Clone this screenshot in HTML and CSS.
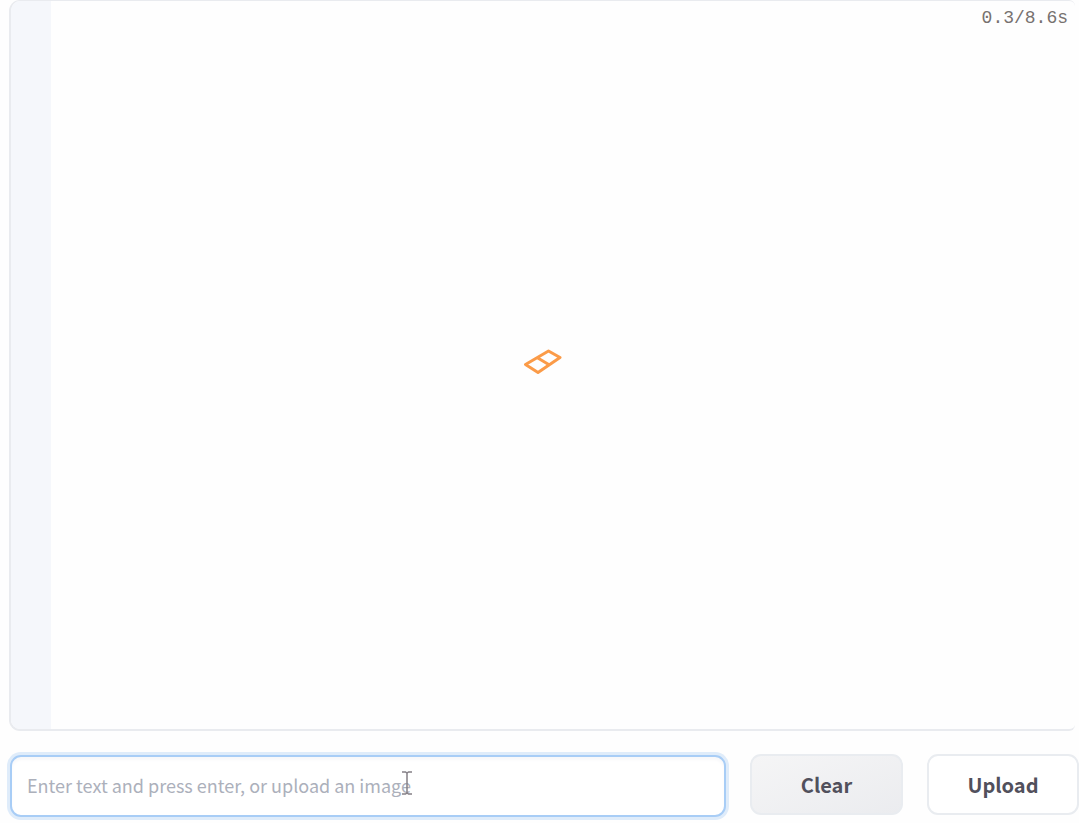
FILE: index.html
```html
<!DOCTYPE html>
<html lang="en">
<head>
<meta charset="utf-8">
<title>Chat</title>
<link rel="stylesheet" href="styles.css">
</head>
<body>
<main class="app">
  <section class="panel" aria-label="Conversation">
    <div class="panel-gutter"></div>
    <div class="panel-content">
      <svg class="loader" viewBox="0 0 40 28" role="img" aria-label="Loading">
        <path d="M3.500 16.500 26.500 3 38 9.500 16 24.500ZM15 9.500 27.500 17" />
      </svg>
      <span class="timer">0.3/8.6s</span>
    </div>
  </section>
  <form class="composer">
    <div class="field">
      <input class="text-input" type="text" aria-label="Message" placeholder="Enter text and press enter, or upload an image">
      <svg class="pointer" viewBox="0 0 12 24" aria-hidden="true">
        <path d="M1 1h3.500l1.500 1 1.500-1H11M6 2v20M1 23h3.500l1.500-1 1.500 1H11" />
      </svg>
    </div>
    <button class="button button-clear" type="button">Clear</button>
    <button class="button button-upload" type="button">Upload</button>
  </form>
</main>
</body>
</html>
```
FILE: styles.css
```css
* {
  box-sizing: border-box;
}

body {
  margin: 0;
  background: #fefefe;
  font-family: "Source Sans Pro", "Noto Sans CJK SC", sans-serif;
}

.app {
  display: flex;
  flex-direction: column;
  gap: 23px;
  min-height: 100vh;
  padding: 0 0 6px 9px;
  overflow: hidden;
}

.panel {
  display: flex;
  flex: 1;
  margin-right: 4px;
  border: 2px solid #e9ebef;
  border-top-width: 1px;
  border-right: 0;
  border-radius: 11px 6px 6px 11px;
  overflow: hidden;
}

.panel-gutter {
  width: 40px;
  background: #f5f7fb;
}

.panel-content {
  position: relative;
  display: flex;
  flex: 1;
  align-items: center;
  justify-content: center;
  padding: 0 42px 6px 0;
}

.loader {
  width: 40px;
  height: 28px;
  fill: none;
  stroke: #fb9b48;
  stroke-width: 3;
  stroke-linejoin: round;
}

.timer {
  position: absolute;
  top: 5px;
  right: 7px;
  color: #77716f;
  font: 18px/24px "Liberation Mono", monospace;
}

.composer {
  display: grid;
  grid-template-columns: 1fr 153px 152px;
  align-items: start;
  gap: 24px;
  padding-left: 1px;
}

.field {
  position: relative;
  padding-top: 1px;
}

.text-input {
  display: block;
  width: 100%;
  height: 62px;
  padding: 0 15px 2px;
  border: 2px solid #a8cdf6;
  border-radius: 11px;
  outline: none;
  background: #fff;
  box-shadow: 0 0 0 3px #dfecfa, inset 0 3px 3px #f8f8fa;
  color: #3f3f46;
  font: 18px/30px "Source Sans Pro", "Noto Sans CJK SC", sans-serif;
}

.text-input::placeholder {
  color: #acb0bb;
  opacity: 1;
}

.pointer {
  position: absolute;
  top: 17px;
  left: 391px;
  width: 12px;
  height: 24px;
  fill: none;
  stroke: #858087;
  stroke-width: 1.5;
}

.button {
  height: 61px;
  padding: 0;
  border: 2px solid #e9ecf0;
  border-radius: 11px;
  color: #51505c;
  font: 700 20px/30px "Source Sans Pro", "Noto Sans CJK SC", sans-serif;
}

.button-clear {
  background: linear-gradient(to bottom right, #f5f5f6, #ebecef);
}

.button-upload {
  background: #fff;
}
```
